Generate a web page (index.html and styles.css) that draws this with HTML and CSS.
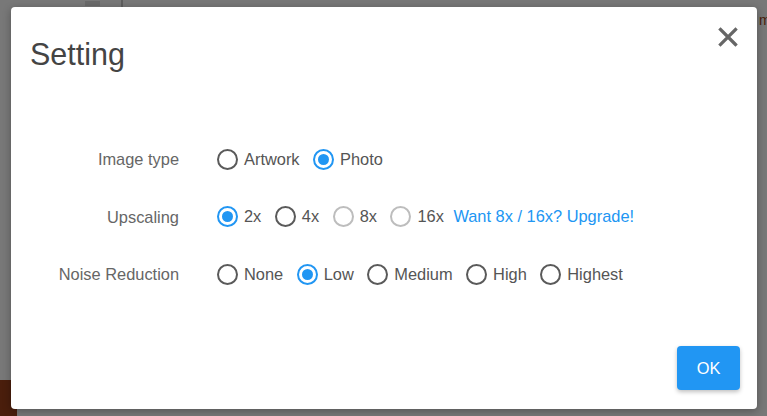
FILE: index.html
```html
<!DOCTYPE html>
<html>
<head>
<meta charset="utf-8">
<link rel="stylesheet" href="styles.css">
</head>
<body>
<div class="backdrop">
  <div class="bg-thumb"></div>
  <div class="bg-mark"></div>
  <div class="bg-line"></div>
  <span class="bg-letter">m</span>
</div>
<div class="overlay">
  <div class="modal">
    <div class="modal-header">
      <h1 class="modal-title">Setting</h1>
      <button class="close" aria-label="Close">
        <svg width="20" height="20" viewBox="0 0 20 20"><path d="M2.5 2.5 L17.5 17.5 M17.5 2.5 L2.5 17.5" stroke="#666" stroke-width="3.2" stroke-linecap="square" fill="none"/></svg>
      </button>
    </div>
    <div class="form">
      <div class="label">Image type</div>
      <div class="options">
        <label class="opt"><span class="radio"></span><span>Artwork</span></label>
        <label class="opt"><span class="radio checked"></span><span>Photo</span></label>
      </div>
      <div class="label">Upscaling</div>
      <div class="options">
        <label class="opt"><span class="radio checked"></span><span>2x</span></label>
        <label class="opt"><span class="radio"></span><span>4x</span></label>
        <label class="opt"><span class="radio disabled"></span><span>8x</span></label>
        <label class="opt"><span class="radio disabled"></span><span>16x</span></label>
        <a class="upgrade">Want 8x / 16x? Upgrade!</a>
      </div>
      <div class="label">Noise Reduction</div>
      <div class="options">
        <label class="opt"><span class="radio"></span><span>None</span></label>
        <label class="opt"><span class="radio checked"></span><span>Low</span></label>
        <label class="opt"><span class="radio"></span><span>Medium</span></label>
        <label class="opt"><span class="radio"></span><span>High</span></label>
        <label class="opt"><span class="radio"></span><span>Highest</span></label>
      </div>
    </div>
    <div class="footer">
      <button class="ok">OK</button>
    </div>
  </div>
</div>
</body>
</html>
```

FILE: styles.css
```css
html, body {
  margin: 0;
  padding: 0;
  width: 767px;
  height: 416px;
  overflow: hidden;
}
body {
  background: #787878;
  font-family: "Liberation Sans", Arial, sans-serif;
  position: relative;
}
.backdrop {
  position: absolute;
  inset: 0;
  overflow: hidden;
}
.bg-thumb {
  position: absolute;
  left: 0;
  top: 380px;
  width: 17px;
  height: 36px;
  background: #4a1e0c;
}
.bg-mark {
  position: absolute;
  left: 85px;
  top: 1px;
  width: 15px;
  height: 5px;
  background: #6a6a6a;
}
.bg-line {
  position: absolute;
  left: 121px;
  top: 0;
  width: 2px;
  height: 7px;
  background: #5e5e5e;
}
.bg-letter {
  position: absolute;
  left: 759px;
  top: 12px;
  font-size: 14px;
  color: #4a1e0c;
}
.overlay {
  position: absolute;
  inset: 0;
  padding: 7px 10px 7px 11px;
}
.modal {
  height: 402px;
  background: #fff;
  border-radius: 4px;
  box-shadow: 0 2px 8px rgba(0,0,0,0.3);
  display: flex;
  flex-direction: column;
  box-sizing: border-box;
}
.modal-header {
  display: flex;
  justify-content: space-between;
  align-items: flex-start;
  padding: 18px 17px 0 18px;
}
.modal-title {
  margin: 11px 0 0 1px;
  font-size: 30.5px;
  line-height: 36px;
  font-weight: normal;
  color: #444;
}
.close {
  width: 24px;
  height: 24px;
  padding: 0;
  border: 0;
  background: none;
  display: flex;
  align-items: center;
  justify-content: center;
}
.form {
  margin-top: 75px;
  display: grid;
  grid-template-columns: 168px auto;
  column-gap: 38px;
  row-gap: 33.5px;
}
.label {
  text-align: right;
  font-size: 16.4px;
  line-height: 24px;
  color: #666;
}
.options {
  display: flex;
  align-items: center;
  height: 24px;
}
.opt {
  display: flex;
  align-items: center;
  gap: 6px;
  margin-right: 13.5px;
  font-size: 16.4px;
  color: #555;
}
.radio {
  width: 21px;
  height: 21px;
  box-sizing: border-box;
  border: 2px solid #5a5a5a;
  border-radius: 50%;
  display: flex;
  align-items: center;
  justify-content: center;
}
.radio.checked {
  border-color: #2196f3;
}
.radio.checked::after {
  content: "";
  width: 11px;
  height: 11px;
  border-radius: 50%;
  background: #2196f3;
}
.radio.disabled {
  border-color: #bdbdbd;
}
.upgrade {
  margin-left: -4px;
  font-size: 16.4px;
  color: #2196f3;
}
.footer {
  margin-top: auto;
  display: flex;
  justify-content: flex-end;
  padding: 0 17px 19px 0;
}
.ok {
  width: 63px;
  height: 44px;
  border: 0;
  border-radius: 4px;
  background: #2196f3;
  color: #fff;
  font-family: "Liberation Sans", Arial, sans-serif;
  font-size: 16.4px;
  box-shadow: 0 2px 4px rgba(0,0,0,0.25);
}
```
